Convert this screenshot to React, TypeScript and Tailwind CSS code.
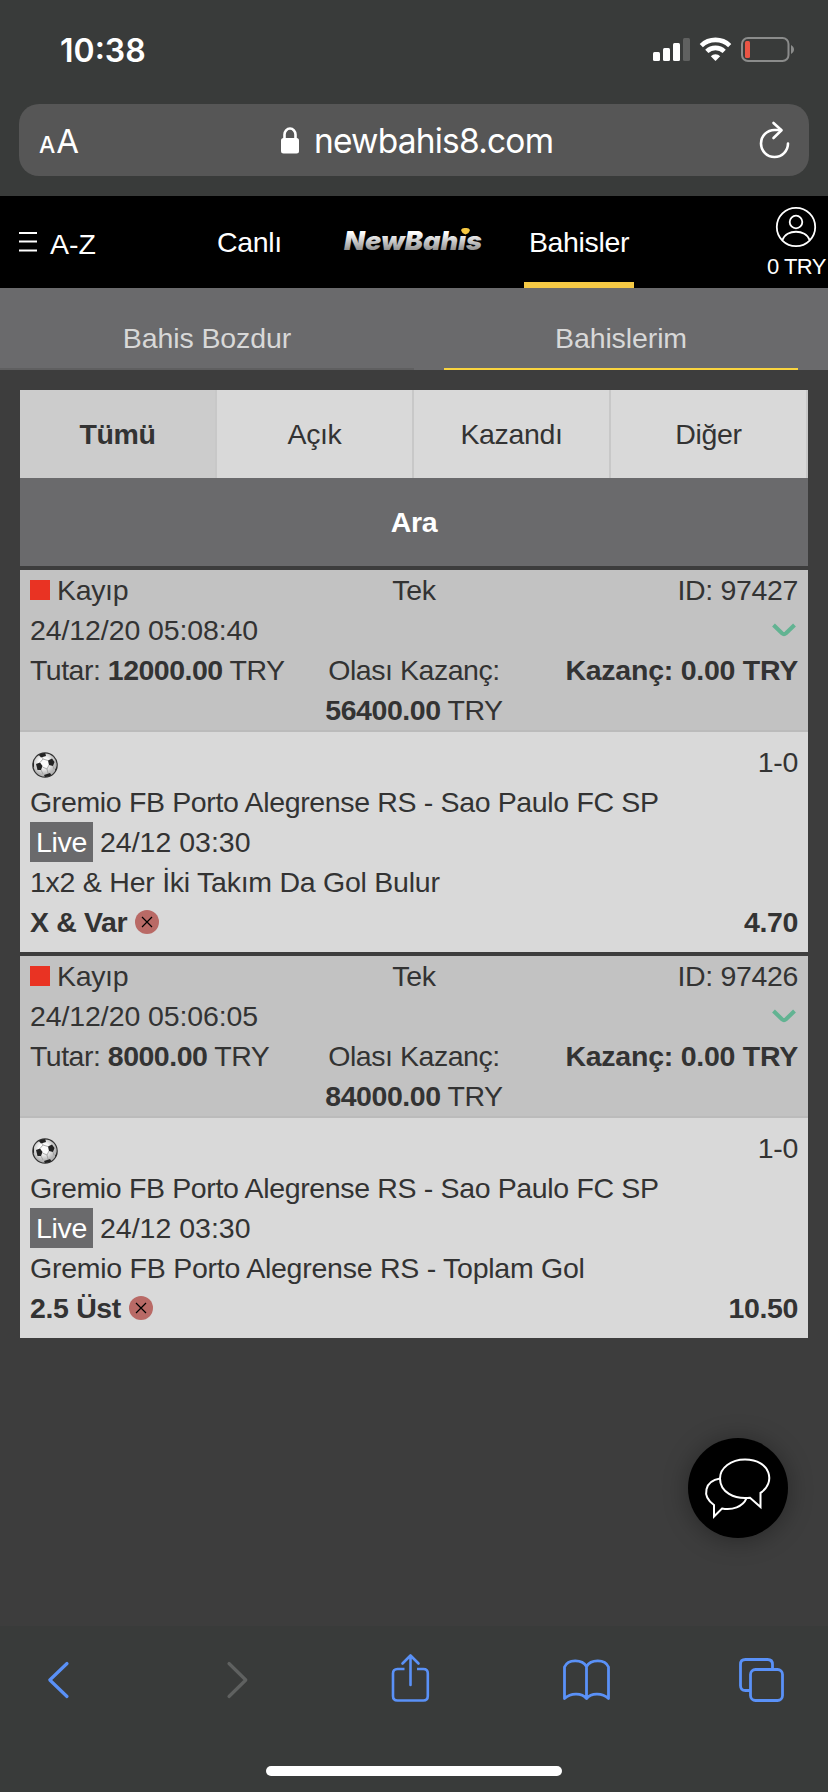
import { clsx } from "clsx";

type Bet = {
  id: string;
  date: string;
  stake: string;
  possibleWin: string;
  win: string;
  score: string;
  match: string;
  matchDate: string;
  market: string;
  pick: string;
  odds: string;
};

const MATCH = "Gremio FB Porto Alegrense RS - Sao Paulo FC SP";

const bets: Bet[] = [
  {
    id: "97427",
    date: "24/12/20 05:08:40",
    stake: "12000.00",
    possibleWin: "56400.00",
    win: "0.00",
    score: "1-0",
    match: MATCH,
    matchDate: "24/12 03:30",
    market: "1x2 & Her İki Takım Da Gol Bulur",
    pick: "X & Var",
    odds: "4.70",
  },
  {
    id: "97426",
    date: "24/12/20 05:06:05",
    stake: "8000.00",
    possibleWin: "84000.00",
    win: "0.00",
    score: "1-0",
    match: MATCH,
    matchDate: "24/12 03:30",
    market: "Gremio FB Porto Alegrense RS - Toplam Gol",
    pick: "2.5 Üst",
    odds: "10.50",
  },
];

const filters = ["Tümü", "Açık", "Kazandı", "Diğer"];

function StatusBar() {
  return (
    <div className="flex h-[104px] items-start justify-between pl-[60px] pr-[34px] pt-[30px] tracking-normal text-white">
      <span className="pt-px font-['Inter',sans-serif] text-[32px] font-semibold leading-[40px]">10:38</span>
      <svg width="142" height="26" viewBox="0 0 142 26" className="mt-[6px]">
        <rect x="1" y="16" width="7" height="9" rx="1.5" fill="#fff" />
        <rect x="11" y="12" width="7" height="13" rx="1.5" fill="#fff" />
        <rect x="21" y="7" width="7" height="18" rx="1.5" fill="#fff" />
        <rect x="31" y="2" width="7" height="23" rx="1.5" fill="#606160" />
        <g fill="none" stroke="#fff" strokeWidth="4.6">
          <path d="M49.3 9.6 A20.5 20.5 0 0 1 77.7 9.6" />
          <path d="M54.8 15.4 A12.6 12.6 0 0 1 72.2 15.4" />
        </g>
        <path d="M58.8 20.2 A6.6 6.6 0 0 1 68.2 20.2 L63.5 25 Z" fill="#fff" />
        <rect x="90" y="2" width="46.5" height="23" rx="6" fill="none" stroke="#8b8c8b" strokeWidth="2" />
        <rect x="93" y="5" width="5" height="17" rx="1.5" fill="#ea5545" />
        <path d="M139 9 C143 11 143 16 139 18 Z" fill="#8b8c8b" />
      </svg>
    </div>
  );
}

function AddressBar() {
  return (
    <div className="mx-[19px] flex h-[72px] items-center rounded-[20px] bg-[#565656] font-['Inter',sans-serif] tracking-normal text-white">
      <div className="flex w-[60px] items-baseline pl-[20px] pt-[6px]">
        <span className="text-[23px] font-medium">A</span>
        <span className="ml-px text-[33px]">A</span>
      </div>
      <div className="flex flex-1 items-center pl-[202px]">
        <svg width="18" height="27" viewBox="0 0 18 27">
          <rect x="0" y="11" width="18" height="15.5" rx="2.5" fill="#fff" />
          <path d="M3.5 12 V7.5 A5.5 6 0 0 1 14.5 7.5 V12" fill="none" stroke="#fff" strokeWidth="2.6" />
        </svg>
        <span className="ml-[15px] pt-[2px] text-[33.5px] leading-[40px] tracking-[-0.8px]">newbahis8.com</span>
      </div>
      <svg width="36" height="44" viewBox="0 0 36 44" className="mb-[4px] mr-[17px]" fill="none" stroke="#fff" strokeWidth="2.6" strokeLinecap="round" strokeLinejoin="round">
        <path d="M32 27.5 A13.5 13.5 0 1 1 18.5 14 H25" />
        <path d="M17.5 7 L25.5 14.3 L17.5 22" />
      </svg>
    </div>
  );
}

function Logo() {
  return (
    <svg width="142" height="30" viewBox="0 0 142 30" className="tracking-normal">
      <defs>
        <linearGradient id="chrome" x1="0" y1="0" x2="0" y2="1">
          <stop offset="0.25" stopColor="#ffffff" />
          <stop offset="0.85" stopColor="#8a8a8a" />
        </linearGradient>
      </defs>
      <text x="2" y="25" fontFamily="Inter, sans-serif" fontSize="26" fontWeight="900" fontStyle="italic" fill="url(#chrome)" textLength="138" lengthAdjust="spacingAndGlyphs">
        NewBahis
      </text>
      {/* yellow dot over the i */}
      <rect x="116" y="0" width="18" height="10" fill="#000" />
      <path d="M119 5 Q120 2.500 123.500 3 Q127 2.500 128 5 Q127 8.500 123.500 9.500 Q120 8.500 119 5 Z" fill="#f5c842" />
    </svg>
  );
}

function SiteNav() {
  return (
    <nav className="flex h-[92px] bg-black text-white">
      <div className="flex w-[217px] pl-[19px] pt-[28px]">
        <svg width="18" height="20" viewBox="0 0 18 20" className="mt-[8px]">
          <path d="M0 1 H18 M0 9.5 H18 M0 18.5 H18" stroke="#fff" strokeWidth="1.8" />
        </svg>
        <span className="ml-[13px] tracking-normal">A-Z</span>
      </div>
      <span className="w-[125px] pt-[26px]">Canlı</span>
      <div className="w-[182px] pt-[29px]">
        <Logo />
      </div>
      <span className="h-full w-[110px] border-b-[6px] border-[#f5c945] pt-[26px] text-center">Bahisler</span>
      <div className="ml-auto flex flex-col items-end pr-[2px] pt-[10px]">
        <svg width="42" height="42" viewBox="0 0 42 42" className="mr-[9px]" fill="none" stroke="#fff" strokeWidth="1.8">
          <circle cx="21" cy="21" r="19.2" />
          <circle cx="21" cy="16" r="6.3" />
          <path d="M7.5 34 C11 23 31 23 34.5 34" />
        </svg>
        <span className="mt-[4px] text-[22px] leading-[30px] tracking-[-0.5px]">0 TRY</span>
      </div>
    </nav>
  );
}

function Tabs() {
  return (
    <div className="flex h-[82px] bg-[#6a6a6c] text-center tracking-[-0.1px] text-[#d8d8d8]">
      <div className="h-full w-[414px] border-b-2 border-[#5f5f60] pt-[30px]">Bahis Bozdur</div>
      <div className="ml-[30px] h-full w-[354px] border-b-2 border-[#f9d43f] pt-[30px]">Bahislerim</div>
    </div>
  );
}

function FootballIcon() {
  return (
    <svg width="26" height="26" viewBox="0 0 26 26" className="ml-[2px] mt-[10px]">
      <defs>
        <clipPath id="ball">
          <circle cx="13" cy="13" r="12" />
        </clipPath>
        <radialGradient id="shine" cx="0.45" cy="0.4">
          <stop offset="0.4" stopColor="#fafafa" />
          <stop offset="1" stopColor="#b4b4b4" />
        </radialGradient>
      </defs>
      <circle cx="13" cy="13" r="12.2" fill="url(#shine)" stroke="#333" strokeWidth="1.2" />
      <g clipPath="url(#ball)" fill="#222">
        <path d="M4 12 L8 10.500 L10.500 14 L9 18 L5.500 18 Z" />
        <path d="M16 8.500 L20 6.500 L22.500 10 L21 14 L17 13 Z" />
        <path d="M6 2 L13 0 L14 4 L9 5.500 Z" />
        <path d="M12 23 L18 21 L20 24 L14 27 Z" />
        <path d="M0 9 L2 7 L2 15 L0 16 Z M25 14 L23 18 L25 20 Z" />
      </g>
      <path d="M8 10.500 L11 7 L16 8.500 M11 7 L10 5 M17 13 L15 17 L10.500 15 M15 17 L16 21 M21 14 L22 17 M9 18 L11 22" fill="none" stroke="#999" strokeWidth="0.8" />
    </svg>
  );
}

function LostIcon() {
  return (
    <svg width="24" height="24" viewBox="0 0 24 24" className="ml-[8px]">
      <circle cx="12" cy="12" r="12" fill="#b96a66" />
      <path d="M7 7 L17 17 M17 7 L7 17" stroke="#000" strokeWidth="1.2" />
    </svg>
  );
}

function BetCard({ bet }: { bet: Bet }) {
  return (
    <article className="mt-1">
      <header className="border-b-2 border-[#bbb] bg-[#c2c2c2] px-[10px]">
        <div className="grid grid-cols-3">
          <div className="flex items-center">
            <span className="h-[20px] w-[20px] bg-[#e93323]" />
            <span className="ml-[7px]">Kayıp</span>
          </div>
          <div className="text-center">Tek</div>
          <div className="text-right">ID: {bet.id}</div>
        </div>
        <div className="flex items-center justify-between">
          <span className="tracking-[-0.1px]">{bet.date}</span>
          <svg width="26" height="16" viewBox="0 0 26 16" className="mr-[1px]">
            <path d="M2.500 3 L11 11.300 Q13 13 15 11.300 L23.500 3" fill="none" stroke="#62b392" strokeWidth="4" />
          </svg>
        </div>
        <div className="grid grid-cols-3">
          <div className="whitespace-nowrap tracking-[-0.5px]">
            Tutar: <b>{bet.stake}</b> TRY
          </div>
          <div className="text-center tracking-[-0.45px]">
            Olası Kazanç: <b>{bet.possibleWin}</b> TRY
          </div>
          <div className="whitespace-nowrap text-right font-bold tracking-[-0.25px]">Kazanç: {bet.win} TRY</div>
        </div>
      </header>
      <div className="bg-[#d9d9d9] px-[10px] py-[10px]">
        <div className="flex h-[40px] justify-between">
          <FootballIcon />
          <span>{bet.score}</span>
        </div>
        <div>{bet.match}</div>
        <div className="flex">
          <span className="w-[63px] bg-[#6a6a6c] text-center text-white">Live</span>
          <span className="ml-[7px] tracking-normal">{bet.matchDate}</span>
        </div>
        <div className="tracking-[-0.25px]">{bet.market}</div>
        <div className="flex items-center font-bold">
          <span>{bet.pick}</span>
          <LostIcon />
          <span className="ml-auto">{bet.odds}</span>
        </div>
      </div>
    </article>
  );
}

function ChatButton() {
  return (
    <button className="absolute left-[688px] top-[1438px] h-[100px] w-[100px] rounded-full bg-black shadow-[0_2px_24px_rgba(0,0,0,0.35)]">
      <svg width="100" height="100" viewBox="0 0 100 100" fill="none" stroke="#fff" strokeWidth="2">
        <path d="M72.500 54.900 C88 45 83 21.500 57 21.500 C43 21.500 32 30 32 40.500 C32 54 46 61.500 62 59.700 L72.500 69 Z" />
        <path d="M32 40.600 C17 43 13 58 26 67 V78.500 L34 70.500 C44 72.500 55 69 58.500 60.200" />
      </svg>
    </button>
  );
}

function SafariToolbar() {
  return (
    <footer className="h-[166px] bg-[#393b3a]">
      <div className="flex pl-[46px] pt-[27px] text-[#5a91f7]">
        <svg width="24" height="52" viewBox="0 0 24 52" fill="none" stroke="currentColor" strokeWidth="3.2" strokeLinecap="round" strokeLinejoin="round">
          <path d="M21 10.500 L3.800 27 L21 43.500" />
        </svg>
        <svg width="24" height="52" viewBox="0 0 24 52" className="ml-[156px] text-[#5f6160]" fill="none" stroke="currentColor" strokeWidth="3.2" strokeLinecap="round" strokeLinejoin="round">
          <path d="M3 10.500 L19.800 27 L3 43.500" />
        </svg>
        <svg width="41" height="52" viewBox="0 0 41 52" className="ml-[140px]" fill="none" stroke="currentColor" strokeWidth="2.6" strokeLinejoin="round">
          <path d="M14.500 16 H7.500 Q3 16 3 20.500 V43 Q3 47.500 7.500 47.500 H33.300 Q37.800 47.500 37.800 43 V20.500 Q37.800 16 33.300 16 H27" />
          <path d="M20.500 32 V3 M12.500 10.500 L20.500 2.500 L28.500 10.500" strokeLinecap="round" />
        </svg>
        <svg width="49" height="52" viewBox="0 0 49 52" className="ml-[131px]" fill="none" stroke="currentColor" strokeWidth="2.800" strokeLinejoin="round">
          <path d="M24.500 45.500 C20 40 9 39.500 2.500 45.500 V14 C6 6 20 6 24.500 13.500 C29 6 43 6 46.500 14 V45.500 C40 39.500 29 40 24.500 45.500 Z M24.500 13.500 V45.500" />
        </svg>
        <svg width="47" height="52" viewBox="0 0 47 52" className="ml-[127px]" fill="none" stroke="currentColor" strokeWidth="2.800">
          <path d="M12 37.500 H7.500 Q2.500 37.500 2.500 32.500 V11.500 Q2.500 6.500 7.500 6.500 H29.500 Q34.500 6.500 34.500 11.500 V16" />
          <rect x="12.500" y="16.500" width="32" height="31" rx="5" />
        </svg>
      </div>
      <div className="mx-auto mt-[61px] h-[10px] w-[296px] rounded-full bg-white" />
    </footer>
  );
}

export default function App() {
  return (
    <div className="relative flex h-[1792px] w-[828px] flex-col overflow-hidden bg-[#3d3d3d] font-['Liberation_Sans',sans-serif] text-[28.5px] leading-[40px] tracking-[-0.35px] text-[#333]">
      <div className="h-[196px] bg-[#393b3a]">
        <StatusBar />
        <AddressBar />
      </div>
      <SiteNav />
      <Tabs />
      <main className="mx-5 mt-5 flex-1">
        <div className="grid grid-cols-4">
          {filters.map((filter, i) => (
            <div
              key={filter}
              className={clsx(
                "flex h-[88px] items-center justify-center border-r-2 border-[#c8c8c8]",
                i === 0 ? "bg-[#cccccc] font-bold" : "bg-[#d9d9d9]",
              )}
            >
              {filter}
            </div>
          ))}
        </div>
        <div className="flex h-[88px] items-center justify-center bg-[#6a6a6c] font-bold text-white">Ara</div>
        {bets.map((bet) => (
          <BetCard key={bet.id} bet={bet} />
        ))}
      </main>
      <SafariToolbar />
      <ChatButton />
    </div>
  );
}
